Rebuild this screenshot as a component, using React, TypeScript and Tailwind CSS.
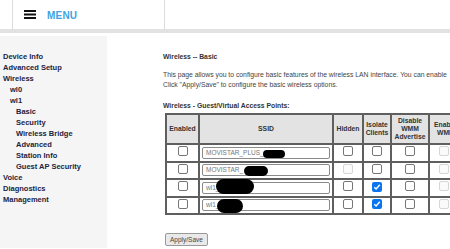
import React from "react";

const NAV: { label: string; indent: number }[] = [
  { label: "Device Info", indent: 0 },
  { label: "Advanced Setup", indent: 0 },
  { label: "Wireless", indent: 0 },
  { label: "wl0", indent: 1 },
  { label: "wl1", indent: 1 },
  { label: "Basic", indent: 2 },
  { label: "Security", indent: 2 },
  { label: "Wireless Bridge", indent: 2 },
  { label: "Advanced", indent: 2 },
  { label: "Station Info", indent: 2 },
  { label: "Guest AP Security", indent: 2 },
  { label: "Voice", indent: 0 },
  { label: "Diagnostics", indent: 0 },
  { label: "Management", indent: 0 },
];

type Row = {
  ssid: string;
  blob: string;
  hiddenDisabled: boolean;
  isolate: boolean;
};

const ROWS: Row[] = [
  { ssid: "MOVISTAR_PLUS_", blob: "left-[60px] top-[2px] w-[22px] h-[8px]", hiddenDisabled: false, isolate: false },
  { ssid: "MOVISTAR_", blob: "left-[41px] top-[1px] w-[24px] h-[10px]", hiddenDisabled: true, isolate: false },
  { ssid: "wl1_", blob: "left-[13px] top-[-4px] w-[38px] h-[15px]", hiddenDisabled: false, isolate: true },
  { ssid: "wl1_", blob: "left-[14px] top-[-1px] w-[26px] h-[14px]", hiddenDisabled: false, isolate: true },
];

function Box({ checked, disabled }: { checked?: boolean; disabled?: boolean }) {
  if (checked) {
    return (
      <span className="inline-flex h-[10px] w-[10px] items-center justify-center rounded-[2px] bg-[#0b75f0]">
        <svg width="8" height="8" viewBox="0 0 8 8">
          <path d="M1.3 4.2 L3.1 6 L6.8 1.8" fill="none" stroke="#fff" strokeWidth="1.4" />
        </svg>
      </span>
    );
  }
  return (
    <span
      className={
        disabled
          ? "inline-block h-[10px] w-[10px] rounded-[2px] border border-[#d6d6d6] bg-[#fafafa]"
          : "inline-block h-[10px] w-[10px] rounded-[2px] border border-[#767676] bg-white"
      }
    />
  );
}

const cell = "border-2 border-[#5f5f5f] text-center align-middle p-0";

export default function App() {
  return (
    <div
      className="relative h-[249px] w-[450px] overflow-hidden bg-white text-[#222]"
      style={{ fontFamily: "'Liberation Sans', Arial, sans-serif" }}
    >
      <header className="h-[33px] border-b-[4px] border-[#e2e2e2]">
        <div className="ml-[12px] flex h-full w-[153px] items-center gap-[11px] border-x border-[#dcdcdc] pl-[11px]">
          <svg width="12" height="9" viewBox="0 0 12 9">
            <rect x="0" y="0" width="12" height="2" fill="#111" />
            <rect x="0" y="3.5" width="12" height="2" fill="#111" />
            <rect x="0" y="7" width="12" height="2" fill="#111" />
          </svg>
          <span className="pt-[1px] text-[10px] font-bold tracking-[0.2px] text-[#3ea3e0]">MENU</span>
        </div>
      </header>

      <div className="flex pt-[3px]">
        <nav className="h-[212px] w-[107px] shrink-0 bg-[#f5f5f5] pt-[15px] pl-[3px]">
          {NAV.map((item) => (
            <div
              key={item.label}
              className={
                "h-[11px] text-[7.5px] font-bold leading-[11px] text-[#1c2440] " +
                (item.indent === 1 ? "pl-[7px]" : item.indent === 2 ? "pl-[13px]" : "")
              }
            >
              {item.label}
            </div>
          ))}
        </nav>

        <main className="min-w-0 flex-1 pl-[56px] pt-[16px] text-[6.8px] leading-[10px]">
          <div className="whitespace-nowrap">
            <p className="font-bold text-[#333]">Wireless -- Basic</p>
            <p className="mt-[8px] text-[#444]">
              This page allows you to configure basic features of the wireless LAN interface. You can enable
            </p>
            <p className="text-[#444]">Click "Apply/Save" to configure the basic wireless options.</p>
            <p className="mt-[11px] font-bold text-[#333]">Wireless - Guest/Virtual Access Points:</p>
          </div>

          <table className="ml-[2px] mt-[2px] w-[313px] table-fixed border-collapse whitespace-nowrap">
            <colgroup>
              <col className="w-[33px]" />
              <col className="w-[134px]" />
              <col className="w-[30px]" />
              <col className="w-[28px]" />
              <col className="w-[38px]" />
              <col className="w-[50px]" />
            </colgroup>
            <thead>
              <tr className="h-[30px] bg-[#e3e3e3] font-bold leading-[8px] text-[#333]">
                <th className={cell}>Enabled</th>
                <th className={cell}>SSID</th>
                <th className={cell}>Hidden</th>
                <th className={cell}>
                  Isolate
                  <br />
                  Clients
                </th>
                <th className={cell}>
                  Disable
                  <br />
                  WMM
                  <br />
                  Advertise
                </th>
                <th className={cell + " text-left pl-[4px]"}>
                  Enable
                  <br />
                  <span className="pl-[3px]">WMF</span>
                </th>
              </tr>
            </thead>
            <tbody>
              {ROWS.map((r, i) => (
                <tr key={i} className="h-[17.5px]">
                  <td className={cell}>
                    <Box />
                  </td>
                  <td className={cell + " px-[2px]"}>
                    <div className="relative flex h-[12px] items-center rounded-[2px] border border-[#8a8a8a] bg-white pl-[3px] text-left text-[6.5px] text-[#777]">
                      {r.ssid}
                      <span className={"absolute rounded-full bg-black " + r.blob} />
                    </div>
                  </td>
                  <td className={cell}>
                    <Box disabled={r.hiddenDisabled} />
                  </td>
                  <td className={cell}>
                    <Box checked={r.isolate} />
                  </td>
                  <td className={cell}>
                    <Box />
                  </td>
                  <td className={cell + " text-left pl-[9px]"}>
                    <Box disabled />
                  </td>
                </tr>
              ))}
            </tbody>
          </table>

          <button className="ml-[2px] mt-[18px] h-[13px] rounded-[2px] border border-[#9a9a9a] bg-[#e9e9e9] px-[4px] text-[6.5px] leading-[11px] text-[#444]">
            Apply/Save
          </button>
        </main>
      </div>
    </div>
  );
}
